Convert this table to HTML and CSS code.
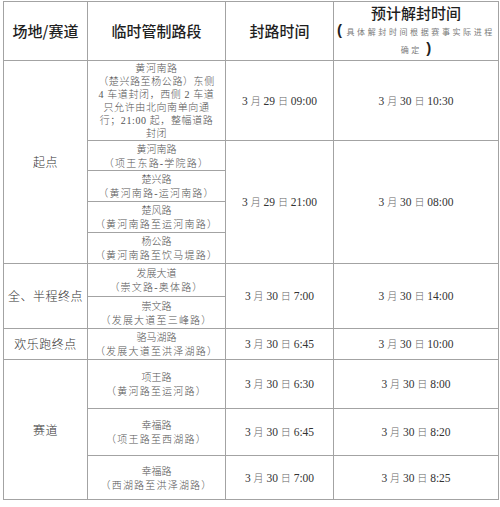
FILE: index.html
```html
<!DOCTYPE html>
<html lang="zh-CN">
<head>
<meta charset="utf-8">
<title>临时管制路段</title>
<link rel="stylesheet" href="styles.css">
</head>
<body>
<table class="grid">
  <colgroup>
    <col class="c1"><col class="c2"><col class="c3"><col class="c4">
  </colgroup>
  <thead>
    <tr class="h-head">
      <th>场地/赛道</th>
      <th>临时管制路段</th>
      <th>封路时间</th>
      <th>
        <div class="th-title">预计解封时间</div>
        <div class="th-note"><span class="paren">(</span> 具体解封时间根据赛事实际进程</div>
        <div class="th-note">确定 <span class="paren">)</span></div>
      </th>
    </tr>
  </thead>
  <tbody>
    <tr class="h80">
      <td rowspan="5" class="place">起点</td>
      <td class="road tight">
        <div class="ln">黄河南路</div>
        <div class="ln">（楚兴路至杨公路）东侧</div>
        <div class="ln">4 车道封闭，西侧 2 车道</div>
        <div class="ln">只允许由北向南单向通</div>
        <div class="ln">行；21:00 起，整幅道路</div>
        <div class="ln">封闭</div>
      </td>
      <td class="time">3 <span class="u">月</span> 29 <span class="u">日</span> 09:00</td>
      <td class="time">3 <span class="u">月</span> 30 <span class="u">日</span> 10:30</td>
    </tr>
    <tr class="h30">
      <td class="road"><div class="ln">黄河南路</div><div class="ln sub">（项王东路-学院路）</div></td>
      <td rowspan="4" class="time">3 <span class="u">月</span> 29 <span class="u">日</span> 21:00</td>
      <td rowspan="4" class="time">3 <span class="u">月</span> 30 <span class="u">日</span> 08:00</td>
    </tr>
    <tr class="h31">
      <td class="road"><div class="ln">楚兴路</div><div class="ln sub">（黄河南路-运河南路）</div></td>
    </tr>
    <tr class="h31">
      <td class="road"><div class="ln">楚风路</div><div class="ln sub">（黄河南路至运河南路）</div></td>
    </tr>
    <tr class="h31">
      <td class="road"><div class="ln">杨公路</div><div class="ln sub">（黄河南路至饮马堤路）</div></td>
    </tr>
    <tr class="h33">
      <td rowspan="2" class="place">全、半程终点</td>
      <td class="road"><div class="ln">发展大道</div><div class="ln sub">（崇文路-奥体路）</div></td>
      <td rowspan="2" class="time">3 <span class="u">月</span> 30 <span class="u">日</span> 7:00</td>
      <td rowspan="2" class="time">3 <span class="u">月</span> 30 <span class="u">日</span> 14:00</td>
    </tr>
    <tr class="h32">
      <td class="road"><div class="ln">崇文路</div><div class="ln sub">（发展大道至三峰路）</div></td>
    </tr>
    <tr class="h31">
      <td class="place">欢乐跑终点</td>
      <td class="road"><div class="ln">骆马湖路</div><div class="ln sub">（发展大道至洪泽湖路）</div></td>
      <td class="time">3 <span class="u">月</span> 30 <span class="u">日</span> 6:45</td>
      <td class="time">3 <span class="u">月</span> 30 <span class="u">日</span> 10:00</td>
    </tr>
    <tr class="h49">
      <td rowspan="3" class="place">赛道</td>
      <td class="road"><div class="ln">项王路</div><div class="ln sub">（黄河路至运河路）</div></td>
      <td class="time">3 <span class="u">月</span> 30 <span class="u">日</span> 6:30</td>
      <td class="time">3 <span class="u">月</span> 30 <span class="u">日</span> 8:00</td>
    </tr>
    <tr class="h47">
      <td class="road"><div class="ln">幸福路</div><div class="ln sub">（项王路至西湖路）</div></td>
      <td class="time">3 <span class="u">月</span> 30 <span class="u">日</span> 6:45</td>
      <td class="time">3 <span class="u">月</span> 30 <span class="u">日</span> 8:20</td>
    </tr>
    <tr class="h44">
      <td class="road"><div class="ln">幸福路</div><div class="ln sub">（西湖路至洪泽湖路）</div></td>
      <td class="time">3 <span class="u">月</span> 30 <span class="u">日</span> 7:00</td>
      <td class="time">3 <span class="u">月</span> 30 <span class="u">日</span> 8:25</td>
    </tr>
  </tbody>
</table>
</body>
</html>
```

FILE: styles.css
```css
html, body {
  margin: 0;
  padding: 0;
  background: #ffffff;
}

body {
  padding: 1px 0 0 3px;
  font-family: "Liberation Serif", "Noto Sans CJK SC", serif;
  color: #333333;
}

.grid {
  border-collapse: collapse;
  table-layout: fixed;
  width: 495px;
}

.c1 { width: 84px; }
.c2 { width: 138px; }
.c3 { width: 108px; }
.c4 { width: 165px; }

.grid th,
.grid td {
  border: 1px solid #a3a3a3;
  padding: 0;
  text-align: center;
  vertical-align: middle;
  white-space: nowrap;
  overflow: hidden;
  line-height: 14px;
}

.grid th {
  font-family: "Noto Sans CJK SC", "Liberation Sans", sans-serif;
  font-weight: 500;
  font-size: 15px;
  color: #1f1f1f;
}

.h-head { height: 59px; }
.h80 { height: 80px; }
.h30 { height: 30px; }
.h31 { height: 31px; }
.h32 { height: 32px; }
.h33 { height: 33px; }
.h44 { height: 44px; }
.h47 { height: 47px; }
.h49 { height: 49px; }

.th-title {
  height: 20px;
  line-height: 20px;
}

.th-note {
  height: 18px;
  line-height: 18px;
  font-weight: 400;
  font-size: 8px;
  letter-spacing: 2.6px;
  color: #7a7a7a;
}

.th-note .paren {
  font-family: "Liberation Sans", sans-serif;
  font-size: 15px;
  line-height: 10px;
  font-weight: 700;
  color: #1f1f1f;
  letter-spacing: 0;
}

.place {
  font-family: "Noto Sans CJK SC", serif;
  font-weight: 300;
  font-size: 12px;
  color: #333333;
  letter-spacing: 0.5px;
}

.road {
  font-family: "Liberation Serif", "Noto Sans CJK SC", serif;
  font-weight: 300;
  font-size: 10px;
  color: #555555;
}

.ln {
  height: 14px;
  line-height: 15px;
  overflow: visible;
}

.ln.sub {
  letter-spacing: 1.2px;
}

.road.tight .ln {
  height: 13px;
  line-height: 13px;
  letter-spacing: 0.6px;
}

.time {
  font-family: "Liberation Serif", serif;
  font-size: 11.5px;
  color: #333333;
}

.time .u {
  font-family: "Noto Sans CJK SC", serif;
  font-weight: 300;
  font-size: 10px;
  line-height: 10px;
  color: #666666;
}
```
